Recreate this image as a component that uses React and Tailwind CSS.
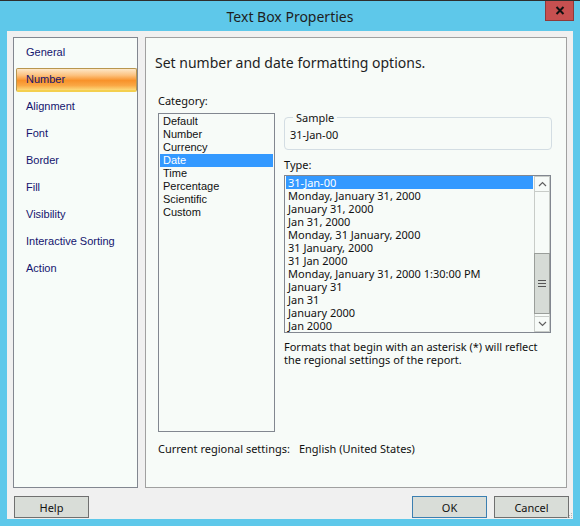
import React from "react";

const NAV = [
  "General",
  "Number",
  "Alignment",
  "Font",
  "Border",
  "Fill",
  "Visibility",
  "Interactive Sorting",
  "Action",
];

const CATEGORIES = [
  "Default",
  "Number",
  "Currency",
  "Date",
  "Time",
  "Percentage",
  "Scientific",
  "Custom",
];

const TYPES = [
  "31-Jan-00",
  "Monday, January 31, 2000",
  "January 31, 2000",
  "Jan 31, 2000",
  "Monday, 31 January, 2000",
  "31 January, 2000",
  "31 Jan 2000",
  "Monday, January 31, 2000 1:30:00 PM",
  "January 31",
  "Jan 31",
  "January 2000",
  "Jan 2000",
];

const FONT = { fontFamily: '"Noto Sans", "Open Sans", sans-serif' };
const SANS = { fontFamily: '"Liberation Sans", Arial, sans-serif' };

function Button({ children, primary }) {
  return (
    <button
      className={`w-[75px] h-[22px] bg-[#d9ddd8] border text-[11px] text-[#111] leading-none ${
        primary ? "border-[#3c7fb1]" : "border-[#707070]"
      }`}
    >
      {children}
    </button>
  );
}

function Chevron({ up }) {
  return (
    <svg width="9" height="6" viewBox="0 0 9 6" className="block">
      <path
        d={up ? "M1 5 L4.5 1.5 L8 5" : "M1 1 L4.5 4.5 L8 1"}
        fill="none"
        stroke="#606060"
        strokeWidth="1.2"
      />
    </svg>
  );
}

function ScrollBar() {
  return (
    <div className="w-[16px] h-full flex flex-col bg-[#f7fbf8]">
      <div className="h-[16px] border border-[#c8ccc8] flex items-center justify-center">
        <Chevron up />
      </div>
      <div className="flex-1 flex flex-col border-x border-[#c8ccc8]">
        <div className="h-[61px]" />
        <div className="h-[61px] -mx-px bg-[#d6dbd6] border border-[#9a9e9a] flex flex-col items-center justify-center gap-[2px]">
          <div className="w-[8px] h-px bg-[#555]" />
          <div className="w-[8px] h-px bg-[#555]" />
          <div className="w-[8px] h-px bg-[#555]" />
        </div>
        <div className="flex-1" />
      </div>
      <div className="h-[16px] border border-[#c8ccc8] flex items-center justify-center">
        <Chevron />
      </div>
    </div>
  );
}

export default function App() {
  return (
    <div
      className="w-[580px] h-[526px] bg-[#5ec8ea] flex flex-col border-t border-[#2e2e2e] overflow-hidden"
      style={FONT}
    >
      {/* Title bar */}
      <div className="h-[30px] flex items-center justify-center relative shrink-0">
        <span className="text-[14px] text-[#1e1e1e]">Text Box Properties</span>
        <div className="absolute right-[6px] -top-px w-[29px] h-[21px] bg-[#c75050] border border-[#8f3a3a] flex items-center justify-center">
          <svg width="10" height="9" viewBox="0 0 10 9">
            <path d="M1.5 1 L8.5 8 M8.5 1 L1.5 8" stroke="#111" strokeWidth="2" />
          </svg>
        </div>
      </div>

      {/* Body */}
      <div className="flex-1 mx-[7px] mb-[7px] bg-[#f0f0f0] flex flex-col px-[6px] pt-[6px] relative">
        <div className="flex gap-[7px] h-[451px]">
          {/* Nav */}
          <div
            className="w-[125px] bg-[#f7fcf9] border border-[#828790] pt-[1px] pl-[2px]"
            style={SANS}
          >
            {NAV.map((n) => (
              <div key={n} className="h-[27px] flex items-center">
                <div
                  className={`w-full h-[24px] flex items-center pl-[9px] text-[11px] text-[#14146e] ${
                    n === "Number"
                      ? "border border-[#b8964f] border-b-[#f4cf4e] border-b-2 rounded-[2px] bg-[linear-gradient(to_bottom,#fde7c8_0%,#fcc27f_30%,#f8922a_55%,#faa744_78%,#fcd97a_100%)]"
                      : "border border-transparent"
                  }`}
                >
                  {n}
                </div>
              </div>
            ))}
          </div>

          {/* Main */}
          <div className="flex-1 bg-[#f7fbf8] border border-[#a0a0a0] flex flex-col">
            <div className="pl-[9px] pt-[15px] h-[56px] text-[14px] text-[#1e1e1e] leading-[20px]">
              Set number and date formatting options.
            </div>
            <div className="flex pl-[12px] text-[11px] text-[#111] leading-[13px]">
              <div className="w-[117px] flex flex-col">
                <div className="h-[13px]">Category:</div>
                <div
                  className="mt-[6px] h-[319px] bg-[#f7fbf8] border border-[#828790] p-px"
                  style={SANS}
                >
                  {CATEGORIES.map((c) => (
                    <div
                      key={c}
                      className={`h-[13px] px-[3px] ${
                        c === "Date" ? "bg-[#3399ff] text-white" : ""
                      }`}
                    >
                      {c}
                    </div>
                  ))}
                </div>
              </div>
              <div className="ml-[9px] w-[268px] flex flex-col">
                <fieldset className="mt-[17px] h-[39px] border border-[#d3dde3] rounded-[4px] px-[5px]">
                  <legend className="px-[3px] ml-[3px] h-[13px]">Sample</legend>
                  <div className="mt-[4px]">31-Jan-00</div>
                </fieldset>
                <div className="mt-[8px] h-[13px]">Type:</div>
                <div className="mt-[4px] w-[267px] h-[158px] border border-[#828790] bg-[#f7fbf8] flex overflow-hidden">
                  <div className="flex-1 px-px overflow-hidden">
                    {TYPES.map((t, i) => (
                      <div
                        key={t}
                        className={`h-[13px] px-[2px] whitespace-nowrap ${
                          i === 0 ? "bg-[#3399ff] text-white" : ""
                        }`}
                      >
                        {t}
                      </div>
                    ))}
                  </div>
                  <ScrollBar />
                </div>
                <div className="mt-[7px]">
                  Formats that begin with an asterisk (*) will reflect
                  <br />
                  the regional settings of the report.
                </div>
              </div>
            </div>
            <div className="pl-[12px] mt-[10px] text-[11px] text-[#111] leading-[13px] flex">
              <span>Current regional settings:</span>
              <span className="ml-[9px]">English (United States)</span>
            </div>
          </div>
        </div>

        {/* Buttons */}
        <div className="flex mt-[8px] pl-px -mr-[2px]">
          <Button>Help</Button>
          <div className="flex-1" />
          <Button primary>OK</Button>
          <div className="w-[7px]" />
          <Button>Cancel</Button>
        </div>
        <svg width="6" height="6" viewBox="0 0 6 6" className="absolute right-0 bottom-0">
          <rect x="4" y="0" width="1" height="1" fill="#b5b5b5" />
          <rect x="2" y="2" width="1" height="1" fill="#b5b5b5" />
          <rect x="4" y="2" width="1" height="1" fill="#b5b5b5" />
          <rect x="0" y="4" width="1" height="1" fill="#b5b5b5" />
          <rect x="2" y="4" width="1" height="1" fill="#b5b5b5" />
          <rect x="4" y="4" width="1" height="1" fill="#b5b5b5" />
        </svg>
      </div>
    </div>
  );
}
